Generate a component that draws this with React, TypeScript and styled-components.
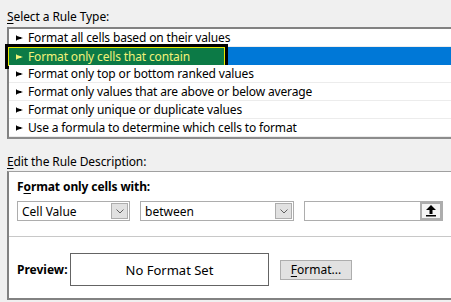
import React from "react";
import styled, { createGlobalStyle } from "styled-components";

const GlobalStyle = createGlobalStyle`
  html, body {
    margin: 0;
    padding: 0;
    background: #f0f0f0;
  }
  body {
    font-family: "Noto Sans", "Open Sans", sans-serif;
    font-size: 12px;
    color: #000;
  }
`;

const Page = styled.div`
  width: 451px;
  height: 302px;
  overflow: hidden;
  padding-left: 7px;
  box-sizing: border-box;
`;

const SectionLabel = styled.div<{ $top: number; $gap: number }>`
  padding-top: ${(p) => p.$top}px;
  height: 15px;
  line-height: 15px;
  margin-bottom: ${(p) => p.$gap}px;
  letter-spacing: -0.1px;
  u {
    text-decoration: underline;
    text-underline-offset: 2px;
  }
`;

//------规则类型列表-------
const RuleList = styled.ul`
  list-style: none;
  margin: 0;
  padding: 0;
  width: 460px;
  background: #fff;
  border-top: 2px solid #828282;
  border-left: 2px solid #828282;
  border-bottom: 2px solid #8c8c8c;
`;

const RuleRow = styled.li<{ $selected?: boolean }>`
  position: relative;
  height: 17px;
  line-height: 17px;
  border-bottom: 1px solid ${(p) => (p.$selected ? "#0078d7" : "#ececec")};
  background: ${(p) => (p.$selected ? "#0078d7" : "#fff")};
  display: flex;
  align-items: center;
  padding-left: 7px;
  gap: 5px;
  white-space: nowrap;
  letter-spacing: -0.15px;
`;

const Highlight = styled.div`
  position: absolute;
  left: -4px;
  top: -3px;
  width: 223px;
  height: 25px;
  box-sizing: border-box;
  border: 3px solid #000;
  box-shadow: inset 0 0 0 1px #e8e800;
  background: #0c7a46;
  color: #f2f27a;
  display: flex;
  align-items: center;
  padding-left: 8px;
  gap: 5px;
`;

const RuleArrow = ({ color = "#000" }: { color?: string }) => (
  <svg width="7" height="6" viewBox="0 0 7 6">
    <rect x="0" y="0.5" width="1" height="5" fill={color} />
    <polygon points="1,1 7,3 1,5" fill={color} />
    <rect x="1" y="2" width="4" height="2" fill={color} />
  </svg>
);

//------规则描述-------
const DescBox = styled.div`
  width: 460px;
  height: 129px;
  background: #fff;
  border-top: 1px solid #a0a0a0;
  border-left: 2px solid #828282;
  border-bottom: 2px solid #828282;
  box-sizing: border-box;
`;

const ConditionPanel = styled.div`
  height: 65px;
  box-sizing: border-box;
  padding: 7px 0 0 8px;
  border-bottom: 1px solid #c8c8c8;
  width: 444px;
`;

const PanelTitle = styled.div`
  font-weight: bold;
  height: 15px;
  line-height: 15px;
  margin-bottom: 7px;
  letter-spacing: -0.1px;
  u {
    text-underline-offset: 2px;
  }
`;

const Controls = styled.div`
  display: flex;
  gap: 10px;
`;

const Combo = styled.div<{ $width: number }>`
  width: ${(p) => p.$width}px;
  height: 20px;
  box-sizing: border-box;
  border: 1px solid #adadad;
  background: #fff;
  display: flex;
  align-items: center;
  justify-content: space-between;
  padding: 0 1px 0 4px;
`;

const ComboButton = styled.div`
  width: 17px;
  height: 16px;
  box-sizing: border-box;
  border: 1px solid #adadad;
  background: #e1e1e1;
  display: flex;
  align-items: center;
  justify-content: center;
`;

const RefInput = styled.div`
  width: 139px;
  height: 20px;
  box-sizing: border-box;
  border: 1px solid #adadad;
  background: #fff;
  display: flex;
  justify-content: flex-end;
`;

const RefButton = styled.div`
  width: 22px;
  height: 100%;
  box-sizing: border-box;
  border: 2px solid #adadad;
  background: #f4f4f4;
  display: flex;
  align-items: center;
  justify-content: center;
`;

const PreviewPanel = styled.div`
  display: flex;
  align-items: center;
  padding: 16px 0 0 8px;
`;

const PreviewLabel = styled.div`
  font-weight: bold;
  width: 53px;
`;

const PreviewBox = styled.div`
  width: 199px;
  height: 33px;
  box-sizing: border-box;
  border: 1px solid #646464;
  display: flex;
  align-items: center;
  justify-content: center;
  font-size: 13px;
  margin-right: 11px;
`;

const FormatButton = styled.button`
  width: 72px;
  height: 20px;
  border: 1px solid #adadad;
  background: #e1e1e1;
  font-family: inherit;
  font-size: 12px;
  padding: 0;
  color: #000;
  u {
    text-underline-offset: 2px;
  }
`;

const Chevron = () => (
  <svg width="8" height="5" viewBox="0 0 8 5">
    <polyline points="0.5,0.5 4,4 7.5,0.5" fill="none" stroke="#606060" strokeWidth="1" />
  </svg>
);

const UpArrow = () => (
  <svg width="10" height="12" viewBox="0 0 10 12">
    <polygon points="5,0 10,5 6.5,5 6.5,9 3.5,9 3.5,5 0,5" fill="#000" />
    <rect x="0" y="10" width="10" height="1.5" fill="#000" />
  </svg>
);

const rules = [
  "Format all cells based on their values",
  "Format only cells that contain",
  "Format only top or bottom ranked values",
  "Format only values that are above or below average",
  "Format only unique or duplicate values",
  "Use a formula to determine which cells to format",
];

const App = () => {
  const selected = 1;
  return (
    <Page>
      <GlobalStyle />
      <SectionLabel $top={9} $gap={3}>
        <u>S</u>elect a Rule Type:
      </SectionLabel>
      <RuleList>
        {rules.map((rule, index) => (
          <RuleRow key={index} $selected={index === selected}>
            {index === selected ? (
              <Highlight>
                <RuleArrow color="#f2f27a" />
                <span>{rule}</span>
              </Highlight>
            ) : (
              <>
                <RuleArrow />
                <span>{rule}</span>
              </>
            )}
          </RuleRow>
        ))}
      </RuleList>
      <SectionLabel $top={15} $gap={2}>
        <u>E</u>dit the Rule Description:
      </SectionLabel>
      <DescBox>
        <ConditionPanel>
          <PanelTitle>
            F<u>o</u>rmat only cells with:
          </PanelTitle>
          <Controls>
            <Combo $width={113}>
              <span>Cell Value</span>
              <ComboButton>
                <Chevron />
              </ComboButton>
            </Combo>
            <Combo $width={154}>
              <span>between</span>
              <ComboButton>
                <Chevron />
              </ComboButton>
            </Combo>
            <RefInput>
              <RefButton>
                <UpArrow />
              </RefButton>
            </RefInput>
          </Controls>
        </ConditionPanel>
        <PreviewPanel>
          <PreviewLabel>Preview:</PreviewLabel>
          <PreviewBox>No Format Set</PreviewBox>
          <FormatButton>
            <u>F</u>ormat...
          </FormatButton>
        </PreviewPanel>
      </DescBox>
    </Page>
  );
};

export default App;
